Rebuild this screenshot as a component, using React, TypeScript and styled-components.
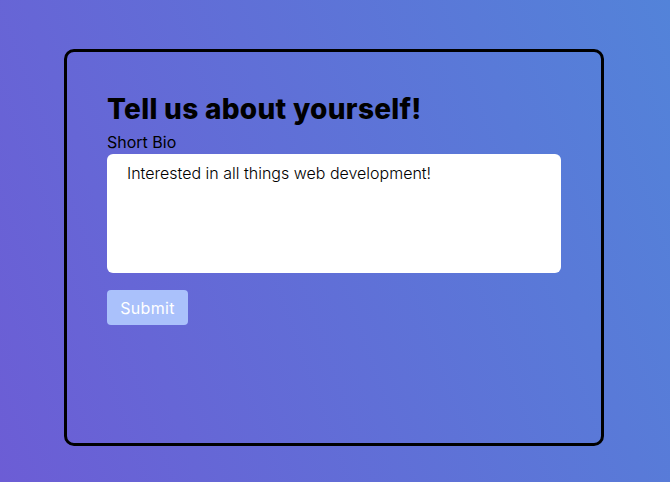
import React from "react";
import styled, { createGlobalStyle } from "styled-components";

const Global = createGlobalStyle`
  html, body { margin: 0; padding: 0; }
  body {
    min-height: 482px;
    background: linear-gradient(70deg, #6c5dd5 0%, #5383d9 100%);
    font-family: "Inter", "Open Sans", sans-serif;
  }
  #root { min-height: 482px; }
`;

const Page = styled.div`
  min-height: 482px;
  padding: 49px 2px 0 0;
  box-sizing: border-box;
`;

const Card = styled.form`
  box-sizing: border-box;
  width: 540px;
  height: 397px;
  margin: 0 auto;
  border: 3px solid #000;
  border-radius: 10px;
  padding: 39px 40px 40px 40px;
  display: flex;
  flex-direction: column;
  align-items: flex-start;
`;

const Title = styled.h1`
  margin: 0;
  font-family: "Inter", sans-serif;
  font-weight: 800;
  font-size: 28px;
  line-height: 36px;
  letter-spacing: 0.3px;
  color: #000;
`;

const Label = styled.label`
  font-family: "Inter", sans-serif;
  font-size: 16px;
  line-height: 20px;
  color: #000;
  margin-top: 5px;
`;

const Bio = styled.textarea`
  box-sizing: border-box;
  width: 454px;
  height: 119px;
  margin-top: 2px;
  border: none;
  border-radius: 6px;
  background: #fff;
  padding: 8px 20px;
  font-family: "Inter", sans-serif;
  font-weight: 300;
  font-size: 16px;
  line-height: 22px;
  color: #000;
  resize: none;
  outline: none;
`;

const Button = styled.button`
  margin-top: 17px;
  width: 81px;
  height: 35px;
  padding: 0;
  border: none;
  border-radius: 4px;
  background: #aac1fb;
  color: #fff;
  font-family: "Inter", sans-serif;
  font-size: 16px;
  letter-spacing: 0.3px;
  cursor: pointer;
`;

export default function App() {
  return (
    <Page>
      <Global />
      <Card onSubmit={(e) => e.preventDefault()}>
        <Title>Tell us about yourself!</Title>
        <Label htmlFor="bio">Short Bio</Label>
        <Bio id="bio" defaultValue="Interested in all things web development!" />
        <Button type="submit">Submit</Button>
      </Card>
    </Page>
  );
}
